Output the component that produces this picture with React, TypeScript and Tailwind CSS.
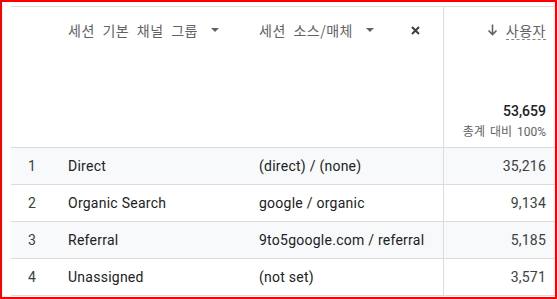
import React from "react";

const rows = [
  { n: "1", name: "Direct", src: "(direct) / (none)", v: "35,216", gray: true },
  { n: "2", name: "Organic Search", src: "google / organic", v: "9,134", gray: false },
  { n: "3", name: "Referral", src: "9to5google.com / referral", v: "5,185", gray: true },
  { n: "4", name: "Unassigned", src: "(not set)", v: "3,571", gray: false },
];

const Caret = () => (
  <svg width="8" height="4" viewBox="0 0 8 4" className="shrink-0">
    <path d="M0 0 L8 0 L4 4 Z" fill="#5f6368" />
  </svg>
);

const kr = { fontFamily: '"Noto Sans CJK KR", "Noto Sans", sans-serif', wordSpacing: "4px" } as React.CSSProperties;

export default function App() {
  return (
    <div
      className="w-[557px] h-[299px] box-border border-2 border-[#ff0000] bg-white pt-[4px] pl-[9px] overflow-hidden"
      style={{ fontFamily: 'Roboto, "Liberation Sans", sans-serif' }}
    >
      <div className="border-t border-[#dadce0]">
        {/* header */}
        <div className="grid grid-cols-[46px_191px_195px_1fr] h-[141px] border-b border-[#dadce0]">
          <div />
          <div className="pl-[11px] pt-[13px]">
            <div className="flex items-center h-[20px] text-[14px] tracking-[0.5px] text-[#5f6368]" style={kr}>
              <span>세션 기본 채널 그룹</span>
              <span className="ml-[13px]"><Caret /></span>
            </div>
          </div>
          <div className="pl-[11px] pt-[13px]">
            <div className="flex items-center h-[20px] text-[14px] tracking-[0.5px] text-[#5f6368]" style={kr}>
              <span>세션 소스/매체</span>
              <span className="ml-[13px]"><Caret /></span>
              <svg width="9" height="9" viewBox="0 0 9 9" className="ml-[37px]">
                <path d="M1 1 L8 8 M8 1 L1 8" stroke="#3c4043" strokeWidth="2" />
              </svg>
            </div>
          </div>
          <div className="border-l border-[#dadce0] pr-[9px] flex flex-col items-end">
            <div className="flex items-center h-[20px] mt-[13px]">
              <svg width="11" height="12" viewBox="0 0 11 12" className="mr-[8px]">
                <path d="M5.5 0.5 V10.5 M1.5 6.5 L5.5 10.5 L9.5 6.5" stroke="#5f6368" strokeWidth="1.6" fill="none" />
              </svg>
              <span
                className="text-[14px] tracking-[0.5px] text-[#5f6368] border-b border-dashed border-[#80868b] leading-[18px]"
                style={kr}
              >
                사용자
              </span>
            </div>
            <div className="mt-[62px] text-[14px] font-medium text-[#202124] leading-[18px]">53,659</div>
            <div className="mt-[4px] text-[12px] text-[#5f6368] leading-[16px]" style={{ fontFamily: 'Roboto, "Noto Sans CJK KR", sans-serif', wordSpacing: "2px" }}>
              총계 대비 100%
            </div>
          </div>
        </div>
        {rows.map((r) => (
          <div
            key={r.n}
            className={`grid grid-cols-[46px_191px_195px_1fr] h-[37px] border-b border-[#dadce0] text-[14px] text-[#202124] ${
              r.gray ? "bg-[#f8f9fa]" : "bg-white"
            }`}
          >
            <div className="pl-[17px] flex items-center text-[#3c4043]">{r.n}</div>
            <div className="pl-[11px] flex items-center tracking-[0.25px]">{r.name}</div>
            <div className="pl-[11px] flex items-center tracking-[0.25px]">{r.src}</div>
            <div className="border-l border-[#dadce0] pr-[9px] flex items-center justify-end text-[#3c4043] tracking-[0.2px]">{r.v}</div>
          </div>
        ))}
      </div>
    </div>
  );
}
